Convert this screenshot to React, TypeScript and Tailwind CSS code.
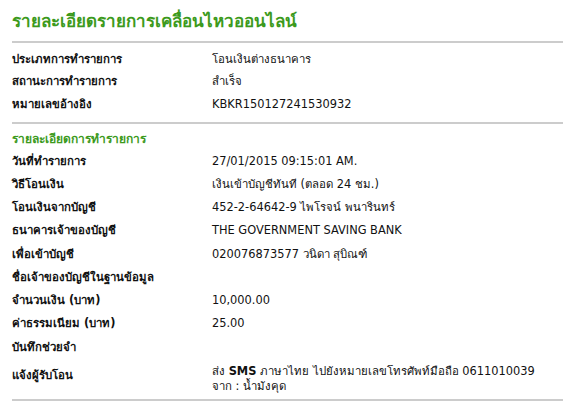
import React from "react";

type Row = { label: string; value?: React.ReactNode };

const summary: Row[] = [
  { label: "ประเภทการทำรายการ", value: "โอนเงินต่างธนาคาร" },
  { label: "สถานะการทำรายการ", value: "สำเร็จ" },
  { label: "หมายเลขอ้างอิง", value: "KBKR150127241530932" },
];

const details: Row[] = [
  { label: "วันที่ทำรายการ", value: "27/01/2015 09:15:01 AM." },
  { label: "วิธีโอนเงิน", value: "เงินเข้าบัญชีทันที (ตลอด 24 ชม.)" },
  { label: "โอนเงินจากบัญชี", value: "452-2-64642-9 ไพโรจน์ พนารินทร์" },
  { label: "ธนาคารเจ้าของบัญชี", value: "THE GOVERNMENT SAVING BANK" },
  { label: "เพื่อเข้าบัญชี", value: "020076873577 วนิดา สุบิณฑ์" },
  { label: "ชื่อเจ้าของบัญชีในฐานข้อมูล" },
  { label: "จำนวนเงิน (บาท)", value: "10,000.00" },
  { label: "ค่าธรรมเนียม (บาท)", value: "25.00" },
  { label: "บันทึกช่วยจำ" },
];

function InfoRow({ label, value, tall }: Row & { tall?: boolean }) {
  return (
    <div className={tall ? "flex h-[23.25px] items-center" : "flex h-[22.5px] items-center"}>
      <div className="w-[200px] shrink-0 font-bold">{label}</div>
      <div>{value}</div>
    </div>
  );
}

export default function App() {
  return (
    <main className="w-[575px] h-[403px] overflow-hidden bg-white px-3 text-[11.4px] text-[#111] font-['DejaVu_Sans','Noto_Sans',sans-serif]">
      <h1 className="pt-[9px] h-[33px] text-[17px] font-bold text-[#3c9a1c]">
        รายละเอียดรายการเคลื่อนไหวออนไลน์
      </h1>
      <div className="mt-[8px] h-[2px] bg-[#cccccc]" />

      {/* ข้อมูลสรุปรายการ */}
      <section className="pt-[5px] pb-[6px]">
        {summary.map((r) => (
          <InfoRow key={r.label} {...r} />
        ))}
      </section>
      <div className="h-[2px] bg-[#cccccc]" />

      {/* รายละเอียดการทำรายการ */}
      <section className="pt-[5px]">
        <h2 className="h-[21px] flex items-center text-[12px] font-bold text-[#3c9a1c]">
          รายละเอียดการทำรายการ
        </h2>
        {details.map((r) => (
          <InfoRow key={r.label} tall {...r} />
        ))}
        <div className="flex h-[40px] items-center">
          <div className="w-[200px] shrink-0 font-bold mb-[6px]">แจ้งผู้รับโอน</div>
          <div className="leading-[15px]">
            <div>
              ส่ง <b>SMS</b> ภาษาไทย ไปยังหมายเลขโทรศัพท์มือถือ 0611010039
            </div>
            <div>จาก : น้ำมังคุด</div>
          </div>
        </div>
      </section>
      <div className="h-[2px] bg-[#cccccc]" />
    </main>
  );
}
